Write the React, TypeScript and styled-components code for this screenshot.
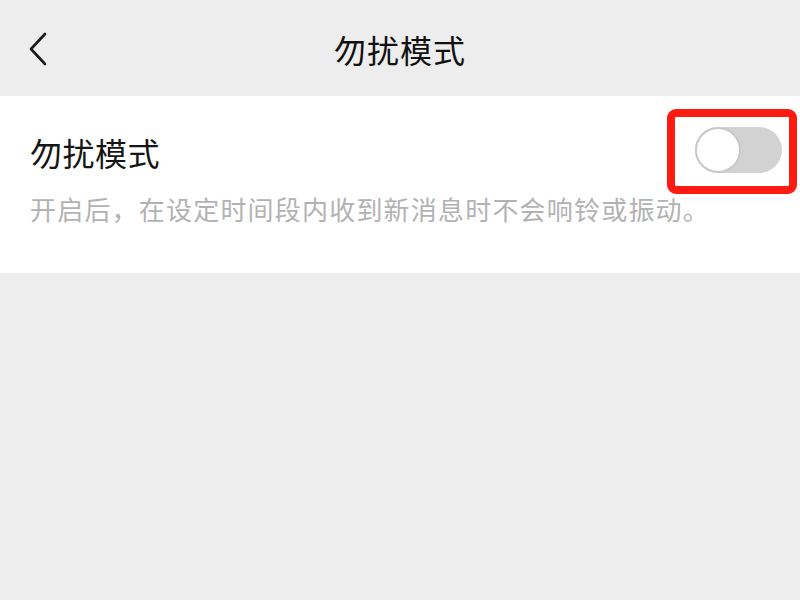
import React, { useState } from 'react';
import styled, { createGlobalStyle } from 'styled-components';

const GlobalStyle = createGlobalStyle`
  html, body {
    margin: 0;
    padding: 0;
    background: #ededed;
    font-family: "Noto Sans CJK SC", "Noto Sans", sans-serif;
  }
`;

const Page = styled.div`
  width: 800px;
  height: 600px;
  background: #ededed;
  overflow: hidden;
`;

const NavBar = styled.header`
  height: 96px;
  display: flex;
  align-items: center;
  justify-content: center;
  position: relative;
  background: #ededed;
`;

const BackButton = styled.button`
  position: absolute;
  left: 22px;
  top: 28px;
  width: 32px;
  height: 42px;
  padding: 0;
  border: none;
  background: none;
  display: flex;
  align-items: center;
  justify-content: center;
  cursor: pointer;
`;

const Title = styled.h1`
  margin: 0;
  margin-top: 2px;
  font-size: 32px;
  font-weight: 400;
  color: #111;
  letter-spacing: 1px;
`;

const Panel = styled.section`
  background: #fff;
  padding: 13px 3px 46px 30px;
`;

const Row = styled.div`
  display: flex;
  align-items: center;
  justify-content: space-between;
`;

const Label = styled.span`
  font-size: 32px;
  color: #151515;
  letter-spacing: 0.5px;
`;

// red annotation frame around the switch
const Highlight = styled.div`
  border: 8px solid #ff1a12;
  border-radius: 9px;
  padding: 10px 7px 13px 20px;
  display: flex;
`;

const Track = styled.button<{ $on: boolean }>`
  width: 87px;
  height: 46px;
  border-radius: 23px;
  border: none;
  padding: 0;
  background: ${(p) => (p.$on ? '#07c160' : '#d2d2d2')};
  display: flex;
  align-items: center;
  justify-content: ${(p) => (p.$on ? 'flex-end' : 'flex-start')};
  cursor: pointer;
`;

const Knob = styled.span`
  width: 46px;
  height: 46px;
  box-sizing: border-box;
  border-radius: 50%;
  background: #fff;
  border: 2px solid #c9c9c9;
`;

const Description = styled.p`
  margin: -3px 0 0;
  font-size: 26px;
  line-height: 36px;
  color: #b2b2b2;
  letter-spacing: 1.2px;
`;

export default function App() {
  const [on, setOn] = useState(false);

  return (
    <Page>
      <GlobalStyle />
      <NavBar>
        <BackButton aria-label="返回">
          <svg width="22" height="36" viewBox="0 0 22 36" fill="none">
            <path d="M18 3 L4 18 L18 33" stroke="#1a1a1a" strokeWidth="2.6" strokeLinecap="round" strokeLinejoin="round" />
          </svg>
        </BackButton>
        <Title>勿扰模式</Title>
      </NavBar>
      <Panel>
        <Row>
          <Label>勿扰模式</Label>
          <Highlight>
            <Track $on={on} onClick={() => setOn(!on)} aria-pressed={on}>
              <Knob />
            </Track>
          </Highlight>
        </Row>
        <Description>开启后，在设定时间段内收到新消息时不会响铃或振动。</Description>
      </Panel>
    </Page>
  );
}
